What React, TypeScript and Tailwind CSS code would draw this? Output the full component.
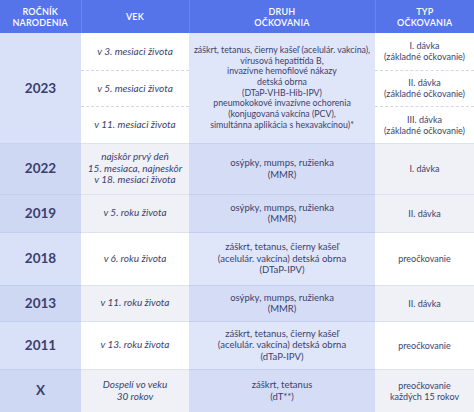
import React from "react";

const navy = "text-[#3b3f6e]";

type Row = {
  year: string;
  age: React.ReactNode;
  kind: React.ReactNode;
  type: React.ReactNode;
  h: string;
  alt: boolean;
};

const rows: Row[] = [
  {
    year: "2022",
    age: (
      <>
        najskôr prvý deň
        <br />
        15. mesiaca, najneskôr
        <br />v 18. mesiaci života
      </>
    ),
    kind: (
      <>
        osýpky, mumps, ružienka
        <br />
        (MMR)
      </>
    ),
    type: "I. dávka",
    h: "h-[51px]",
    alt: true,
  },
  {
    year: "2019",
    age: "v 5. roku života",
    kind: (
      <>
        osýpky, mumps, ružienka
        <br />
        (MMR)
      </>
    ),
    type: "II. dávka",
    h: "h-[38px]",
    alt: true,
  },
  {
    year: "2018",
    age: "v 6. roku života",
    kind: (
      <>
        záškrt, tetanus, čierny kašeľ
        <br />
        (acelulár. vakcína) detská obrna
        <br />
        (DTaP-IPV)
      </>
    ),
    type: "preočkovanie",
    h: "h-[53px]",
    alt: false,
  },
  {
    year: "2013",
    age: "v 11. roku života",
    kind: (
      <>
        osýpky, mumps, ružienka
        <br />
        (MMR)
      </>
    ),
    type: "II. dávka",
    h: "h-[36px]",
    alt: true,
  },
  {
    year: "2011",
    age: "v 13. roku života",
    kind: (
      <>
        záškrt, tetanus, čierny kašeľ
        <br />
        (acelulár. vakcína) detská obrna
        <br />
        (dTaP-IPV)
      </>
    ),
    type: "preočkovanie",
    h: "h-[48px]",
    alt: false,
  },
  {
    year: "X",
    age: (
      <>
        Dospelí vo veku
        <br />
        30 rokov
      </>
    ),
    kind: (
      <>
        záškrt, tetanus
        <br />
        (dT**)
      </>
    ),
    type: (
      <>
        preočkovanie
        <br />
        každých 15 rokov
      </>
    ),
    h: "h-[43px]",
    alt: true,
  },
];

export default function App() {
  return (
    <div
      className={`w-[474px] h-[412px] overflow-hidden bg-white ${navy}`}
      style={{ fontFamily: "Lato, 'Noto Sans', sans-serif" }}
    >
      <table className="w-[474px] table-fixed border-collapse text-center">
        <colgroup>
          <col className="w-[81px]" />
          <col className="w-[108px]" />
          <col className="w-[186px]" />
          <col className="w-[99px]" />
        </colgroup>
        <thead>
          <tr className="h-[33px] bg-[#5674ea] text-white text-[9px] font-semibold uppercase leading-[11px] tracking-[0.2px]">
            <th className="font-semibold border-r border-[#6a85ee]">
              Ročník
              <br />
              narodenia
            </th>
            <th className="font-semibold border-r border-[#6a85ee]">Vek</th>
            <th className="font-semibold border-r border-[#6a85ee]">
              Druh
              <br />
              očkovania
            </th>
            <th className="font-semibold">
              Typ
              <br />
              očkovania
            </th>
          </tr>
        </thead>
        <tbody>
          <tr className="h-[37px]">
            <td
              rowSpan={3}
              className="bg-[#d9e1f8] text-[13.5px] font-bold border-b border-[#c8d2f0]"
            >
              2023
            </td>
            <td className="bg-white italic text-[10px] border-b border-dashed border-[#d3d8e8]">
              v 3. mesiaci života
            </td>
            <td
              rowSpan={3}
              className="bg-[#dfe6fa] text-[8.8px] leading-[10.7px] border-b border-[#c8d2f0]"
            >
              záškrt, tetanus, čierny kašeľ (acelulár. vakcína),
              <br />
              vírusová hepatitída B,
              <br />
              invazívne hemofilové nákazy
              <br />
              detská obrna
              <br />
              (DTaP-VHB-Hib-IPV)
              <br />
              pneumokokové invazívne ochorenia
              <br />
              (konjugovaná vakcína (PCV),
              <br />
              simultánna aplikácia s hexavakcínou)*
            </td>
            <td className="bg-white text-[9px] leading-[11px] border-b border-dashed border-[#d3d8e8]">
              I. dávka
              <br />
              (základné očkovanie)
            </td>
          </tr>
          <tr className="h-[36px]">
            <td className="bg-white italic text-[10px] border-b border-dashed border-[#d3d8e8]">
              v 5. mesiaci života
            </td>
            <td className="bg-white text-[9px] leading-[11px] border-b border-dashed border-[#d3d8e8]">
              II. dávka
              <br />
              (základné očkovanie)
            </td>
          </tr>
          <tr className="h-[37px]">
            <td className="bg-white italic text-[10px] border-b border-[#dde2ee]">
              v 11. mesiaci života
            </td>
            <td className="bg-white text-[9px] leading-[11px] border-b border-[#dde2ee]">
              III. dávka
              <br />
              (základné očkovanie)
            </td>
          </tr>
          {rows.map((r) => (
            <tr key={r.year} className={r.h}>
              <td
                className={`${r.alt ? "bg-[#cfd8f3]" : "bg-[#d9e1f8]"} text-[13.5px] font-bold border-b border-[#c3cdec]`}
              >
                {r.year}
              </td>
              <td
                className={`${r.alt ? "bg-[#eff1f7]" : "bg-white"} italic text-[10px] leading-[11.5px] border-b border-[#dde2ee]`}
              >
                {r.age}
              </td>
              <td
                className={`${r.alt ? "bg-[#d5ddf6]" : "bg-[#dfe6fa]"} text-[9.5px] leading-[11.5px] border-b border-[#c3cdec]`}
              >
                {r.kind}
              </td>
              <td
                className={`${r.alt ? "bg-[#eff1f7]" : "bg-white"} text-[9px] leading-[11px] border-b border-[#dde2ee]`}
              >
                {r.type}
              </td>
            </tr>
          ))}
        </tbody>
      </table>
    </div>
  );
}
